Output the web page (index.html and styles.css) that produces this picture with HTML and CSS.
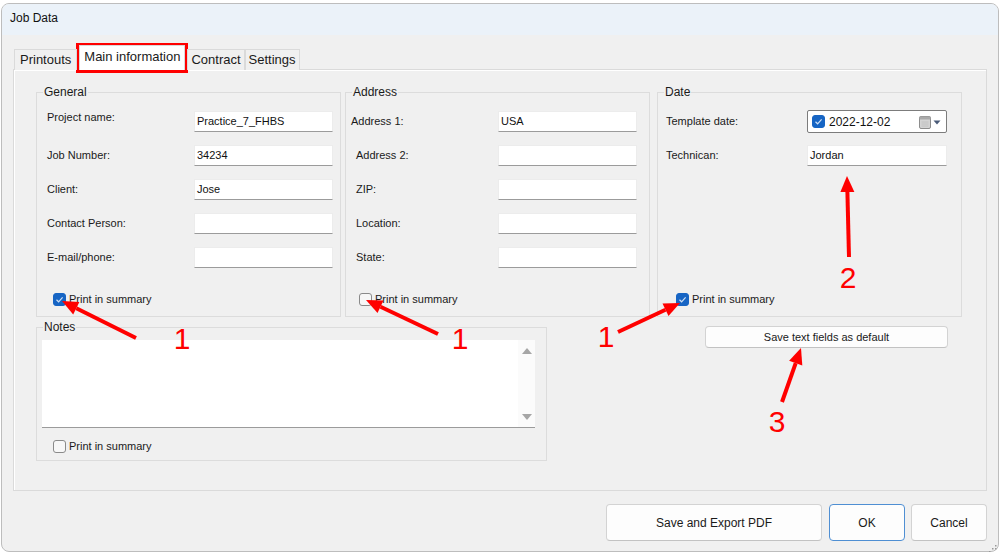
FILE: index.html
```html
<!DOCTYPE html>
<html>
<head>
<meta charset="utf-8">
<title>Job Data</title>
<link rel="stylesheet" href="styles.css">
</head>
<body>
<div class="window">
  <div class="titlebar">Job Data</div>
  <div class="client">
    <div class="tabs">
      <div class="tab">Printouts</div>
      <div class="tab active">Main information</div>
      <div class="tab">Contract</div>
      <div class="tab">Settings</div>
    </div>
    <div class="panel">
      <div class="row-top">
        <fieldset class="gb gb-general">
          <legend>General</legend>
          <div class="gb-body">
            <div class="field"><span class="lbl lbl-up">Project name:</span><div class="input">Practice_7_FHBS</div></div>
            <div class="field"><span class="lbl">Job Number:</span><div class="input">34234</div></div>
            <div class="field"><span class="lbl">Client:</span><div class="input">Jose</div></div>
            <div class="field"><span class="lbl">Contact Person:</span><div class="input"></div></div>
            <div class="field"><span class="lbl">E-mail/phone:</span><div class="input"></div></div>
            <div class="check-row"><span class="cb checked"><svg viewBox="0 0 13 13" width="13" height="13"><path d="M3.5 6.8 L5.6 8.8 L9.6 4.4" fill="none" stroke="#cfe0f5" stroke-width="1.2"/></svg></span><span class="cb-text">Print in summary</span></div>
          </div>
        </fieldset>
        <fieldset class="gb gb-address">
          <legend>Address</legend>
          <div class="gb-body">
            <div class="field"><span class="lbl lbl-left">Address 1:</span><div class="input">USA</div></div>
            <div class="field"><span class="lbl">Address 2:</span><div class="input"></div></div>
            <div class="field"><span class="lbl">ZIP:</span><div class="input"></div></div>
            <div class="field"><span class="lbl">Location:</span><div class="input"></div></div>
            <div class="field"><span class="lbl">State:</span><div class="input"></div></div>
            <div class="check-row"><span class="cb"></span><span class="cb-text">Print in summary</span></div>
          </div>
        </fieldset>
        <fieldset class="gb gb-date">
          <legend>Date</legend>
          <div class="gb-body">
            <div class="field field-date"><span class="lbl">Template date:</span>
              <div class="datepicker">
                <span class="cb checked small"><svg viewBox="0 0 13 13" width="13" height="13"><path d="M3.5 6.8 L5.6 8.8 L9.6 4.4" fill="none" stroke="#cfe0f5" stroke-width="1.2"/></svg></span>
                <span class="date-text">2022-12-02</span>
                <svg class="cal" width="24" height="14" viewBox="0 0 24 14"><rect x="0.5" y="1.5" width="11" height="12" rx="1.5" fill="#d4d4d4" stroke="#8d8d8d"/><rect x="0.5" y="1.5" width="11" height="3" fill="#a9a9a9"/><path d="M2.5 7h7M2.5 9h7M2.5 11h7" stroke="#bdbdbd" stroke-width="0.8"/><path d="M14.5 5.5 L21.5 5.5 L18 9.5 Z" fill="#4a5a78"/></svg>
              </div>
            </div>
            <div class="field"><span class="lbl">Technican:</span><div class="input input-wide">Jordan</div></div>
            <div class="check-row"><span class="cb checked"><svg viewBox="0 0 13 13" width="13" height="13"><path d="M3.5 6.8 L5.6 8.8 L9.6 4.4" fill="none" stroke="#cfe0f5" stroke-width="1.2"/></svg></span><span class="cb-text">Print in summary</span></div>
          </div>
        </fieldset>
      </div>
      <div class="row-bottom">
        <fieldset class="gb gb-notes">
          <legend>Notes</legend>
          <div class="notes-body">
            <div class="textarea">
              <div class="scrollbar">
                <svg width="12" height="8" viewBox="0 0 12 8"><path d="M1 7 L6 1 L11 7 Z" fill="#a6a6a6"/></svg>
                <svg width="12" height="8" viewBox="0 0 12 8"><path d="M1 1 L6 7 L11 1 Z" fill="#a6a6a6"/></svg>
              </div>
            </div>
            <div class="check-row notes-check"><span class="cb"></span><span class="cb-text">Print in summary</span></div>
          </div>
        </fieldset>
        <button class="btn btn-default-text">Save text fields as default</button>
      </div>
    </div>
    <div class="actions">
      <button class="btn btn-big btn-export">Save and Export PDF</button>
      <button class="btn btn-big btn-ok">OK</button>
      <button class="btn btn-big btn-cancel">Cancel</button>
    </div>
  </div>
</div>

<svg class="annot" width="1000" height="552" viewBox="0 0 1000 552">
  <rect x="77.5" y="44.5" width="109" height="27" fill="none" stroke="#ff0000" stroke-width="3"/>
  <g stroke="#ff0000" stroke-width="4" stroke-linecap="butt">
    <line x1="136" y1="338" x2="76.3" y2="308.2"/>
    <line x1="438" y1="334" x2="380.5" y2="306.8"/>
    <line x1="618" y1="332" x2="665.5" y2="309.8"/>
    <line x1="849" y1="257" x2="847.4" y2="192"/>
    <line x1="782" y1="402" x2="795.7" y2="363.1"/>
  </g>
  <g fill="#ff0000">
    <polygon points="62,301 79.4,301.9 73.2,314.5"/>
    <polygon points="366,300 383.5,300.5 377.5,313.1"/>
    <polygon points="680,303 668.5,316.1 662.5,303.5"/>
    <polygon points="847,176 854.4,192 840.4,192"/>
    <polygon points="801,348 802.3,365.4 789.1,360.8"/>
  </g>
  <g class="num" fill="#ff0000" text-anchor="middle">
    <text x="182" y="349">1</text>
    <text x="460" y="349">1</text>
    <text x="606" y="347">1</text>
    <text x="848" y="288">2</text>
    <text x="777" y="432">3</text>
  </g>
  <g fill="#9a9a9a">
    <rect x="995" y="545" width="1.5" height="1.5"/>
    <rect x="992" y="548" width="1.5" height="1.5"/>
    <rect x="995" y="548" width="1.5" height="1.5"/>
    <rect x="989" y="551" width="1.5" height="1.5"/>
  </g>
</svg>
</body>
</html>
```

FILE: styles.css
```css
html, body {
  margin: 0;
  padding: 0;
}
body {
  width: 1000px;
  height: 552px;
  overflow: hidden;
  background: #ffffff;
  position: relative;
  font-family: "Liberation Sans", Arial, sans-serif;
  color: #1a1a1a;
}
.window {
  margin: 3px 0 0 1px;
  width: 998px;
  height: 549px;
  box-sizing: border-box;
  border: 1px solid #bdbdbd;
  border-radius: 8px;
  background: #f0f0f0;
  overflow: hidden;
}
.titlebar {
  height: 31px;
  background: #ebf2f9;
  font-size: 12px;
  line-height: 29px;
  padding-left: 8px;
  color: #111;
}
.client {
  padding: 10px 0 0 11px;
}
.tabs {
  display: flex;
  align-items: flex-end;
  height: 25px;
  margin-left: 1px;
  margin-bottom: -1px;
  position: relative;
  z-index: 1;
}
.tab {
  height: 21px;
  box-sizing: border-box;
  padding: 0 5px;
  border: 1px solid #dadada;
  border-bottom: none;
  background: #f0f0f0;
  font-size: 13px;
  line-height: 20px;
  margin-right: 0;
  color: #1a1a1a;
}
.tab.active {
  height: 25px;
  background: #ffffff;
  line-height: 22px;
  margin: 0 2px 0 2px;
  padding: 0 4px;
}
.tab:nth-child(3),
.tab:nth-child(4) {
  padding: 0 3px;
}
.panel {
  width: 974px;
  height: 422px;
  box-sizing: border-box;
  border: 1px solid #dadada;
  box-shadow: inset 1px 1px 0 #ffffff;
  background: #f0f0f0;
  padding: 15px 0 0 22px;
}
.row-top {
  display: flex;
}
.gb {
  margin: 0;
  padding: 0;
  min-width: 0;
  border: 1px solid #dcdcdc;
  box-sizing: border-box;
  width: 305px;
}
.gb legend {
  font-size: 12px;
  line-height: 14px;
  padding: 0 1px;
  margin-left: 6px;
  color: #1a1a1a;
}
.gb-address { margin-left: 4px; }
.gb-date { margin-left: 7px; }
.gb-body {
  height: 217px;
  box-sizing: border-box;
  display: flex;
  flex-direction: column;
  gap: 13px;
  padding: 12px 0 10px 10px;
}
.gb-date .gb-body {
  padding-left: 8px;
  padding-top: 11px;
  gap: 12px;
}
.field {
  display: flex;
  align-items: center;
  height: 21px;
}
.field-date { height: 23px; }
.lbl {
  font-size: 11px;
  line-height: 13px;
  width: 147px;
  flex: none;
}
.gb-address .lbl { width: 142px; }
.gb-date .lbl { width: 141px; }
.lbl-up { margin-top: -9px; }
.lbl-left { margin-left: -5px; width: 147px !important; }
.input {
  width: 139px;
  height: 21px;
  box-sizing: border-box;
  background: #ffffff;
  border: 1px solid #ececec;
  border-bottom: 1px solid #9b9b9b;
  font-size: 11px;
  line-height: 19px;
  padding-left: 2px;
  color: #111;
}
.input-wide { width: 140px; }
.datepicker {
  width: 140px;
  height: 23px;
  box-sizing: border-box;
  background: #ffffff;
  border: 1px solid #7c7c7c;
  border-radius: 2px;
  display: flex;
  align-items: center;
  padding-left: 4px;
}
.date-text {
  font-size: 12px;
  margin-left: 4px;
  color: #111;
}
.cal {
  margin-left: auto;
  margin-right: 3px;
}
.check-row {
  margin-top: auto;
  display: flex;
  align-items: center;
  height: 14px;
  padding-left: 6px;
}
.gb-address .check-row { padding-left: 3px; }
.gb-date .check-row { padding-left: 10px; }
.cb {
  width: 13px;
  height: 13px;
  box-sizing: border-box;
  border: 1px solid #8a8a8a;
  border-radius: 3px;
  background: #f7f7f7;
  flex: none;
  display: block;
}
.cb svg { display: block; margin: -1px; }
.cb.checked {
  background: #1765c4;
  border-color: #1765c4;
}
.cb-text {
  font-size: 11px;
  margin-left: 3px;
  color: #1a1a1a;
}
.row-bottom {
  display: flex;
  align-items: flex-start;
  margin-top: 3px;
}
.gb-notes {
  width: 511px;
}
.notes-body {
  height: 126px;
  box-sizing: border-box;
  padding: 6px 11px 0 5px;
}
.textarea {
  height: 88px;
  background: #ffffff;
  border-bottom: 1px solid #9b9b9b;
  box-sizing: border-box;
  display: flex;
  justify-content: flex-end;
}
.scrollbar {
  width: 17px;
  background: #fbfbfb;
  display: flex;
  flex-direction: column;
  justify-content: space-between;
  align-items: center;
  padding: 7px 0 6px;
  box-sizing: border-box;
}
.scrollbar svg { display: block; }
.notes-check {
  margin-top: 11px;
  padding-left: 11px;
}
.btn {
  font-family: "Liberation Sans", Arial, sans-serif;
  background: #fdfdfd;
  border: 1px solid #d3d3d3;
  border-bottom-color: #c2c2c2;
  border-radius: 4px;
  color: #1a1a1a;
  padding: 0;
  box-sizing: border-box;
}
.btn-default-text {
  width: 243px;
  height: 22px;
  font-size: 11px;
  margin: 6px 0 0 158px;
}
.actions {
  display: flex;
  justify-content: flex-end;
  width: 974px;
  margin-top: 13px;
}
.btn-big {
  height: 37px;
  font-size: 12px;
}
.btn-export { width: 216px; }
.btn-ok {
  width: 76px;
  margin-left: 7px;
  border: 1px solid #4f8fd3;
}
.btn-cancel {
  width: 76px;
  margin-left: 6px;
}
.annot {
  position: absolute;
  left: 0;
  top: 0;
  pointer-events: none;
}
.num text {
  font-family: "Liberation Sans", Arial, sans-serif;
  font-size: 30px;
}
```
